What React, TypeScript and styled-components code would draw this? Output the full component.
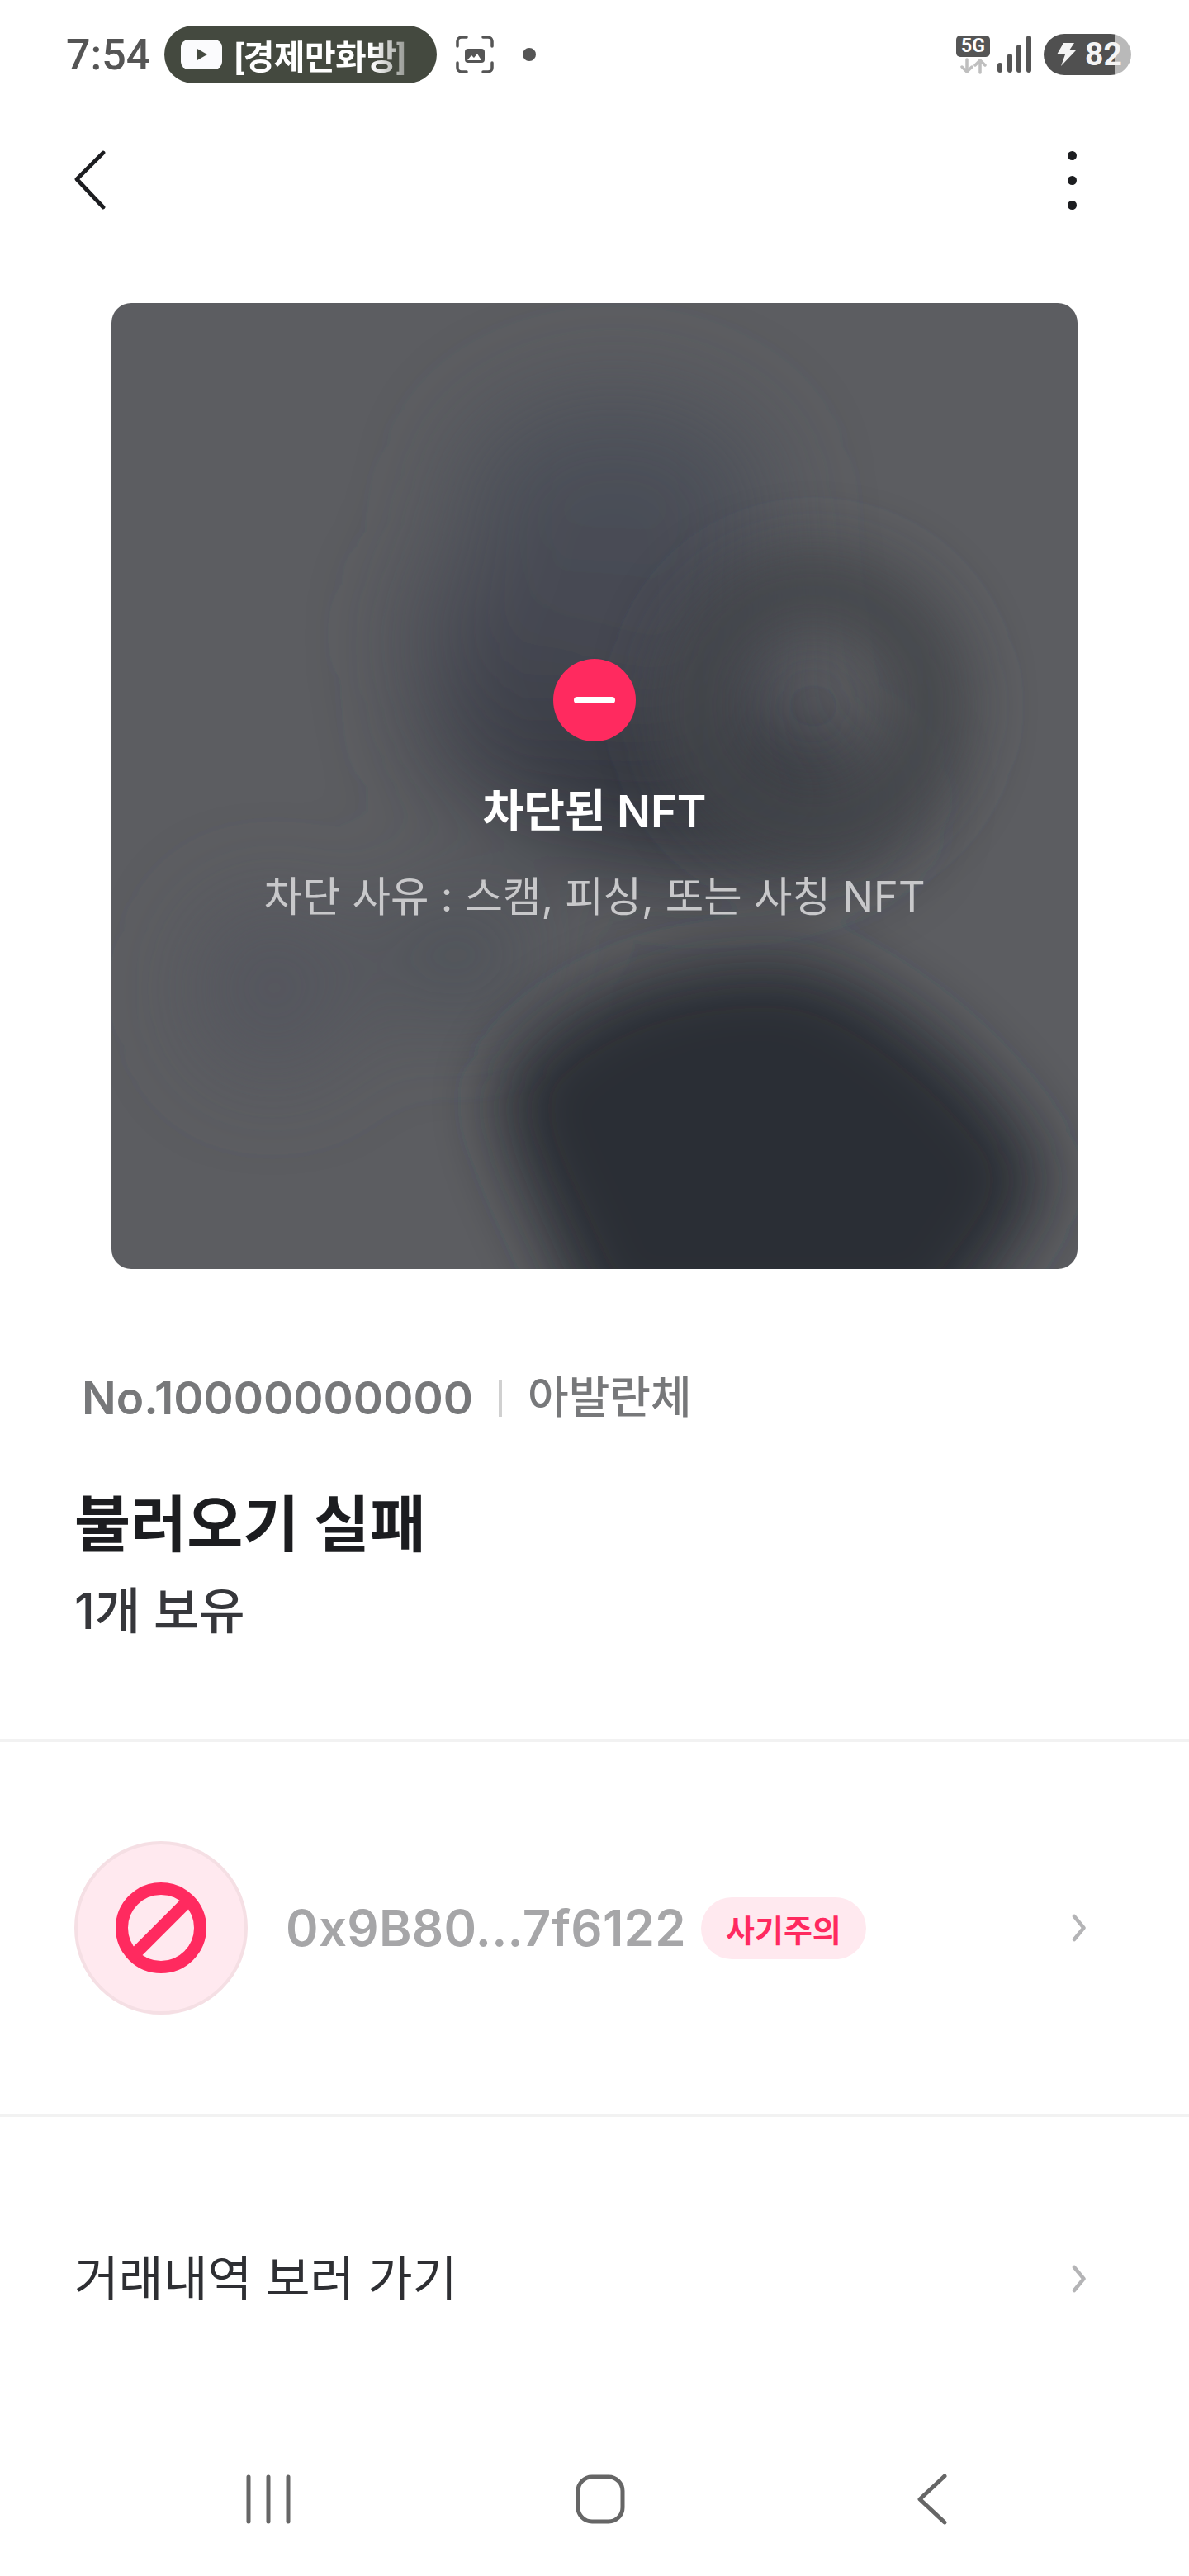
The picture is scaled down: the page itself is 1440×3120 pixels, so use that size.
import React from 'react'
import styled, { createGlobalStyle } from 'styled-components'

const GlobalStyle = createGlobalStyle`
  html, body {
    margin: 0;
    padding: 0;
    background: #ffffff;
  }
  * {
    box-sizing: border-box;
  }
`

const FONT = `Inter, "Noto Sans CJK KR", "Noto Sans", sans-serif`
const SYSTEM_FONT = `Roboto, "Noto Sans CJK KR", sans-serif`

const Chevron = () => (
  <ChevronIcon viewBox="0 0 18 34" fill="none">
    <path d="M3 3l11.5 14L3 31" stroke="#b4b4b6" strokeWidth="4.5" strokeLinecap="round" strokeLinejoin="round" />
  </ChevronIcon>
)

const BlurredArt = () => (
  <Art viewBox="0 0 1170 1170">
    <defs>
      <filter id="soft" x="-60%" y="-60%" width="220%" height="220%">
        <feGaussianBlur stdDeviation="40" />
      </filter>
      <filter id="softer" x="-60%" y="-60%" width="220%" height="220%">
        <feGaussianBlur stdDeviation="62" />
      </filter>
    </defs>
    <g filter="url(#softer)">
      <ellipse cx="610" cy="240" rx="190" ry="130" fill="#4b4f58" />
      <ellipse cx="590" cy="400" rx="230" ry="130" fill="#464953" />
      <ellipse cx="510" cy="520" rx="130" ry="90" fill="#3c3f49" />
      <ellipse cx="720" cy="600" rx="230" ry="90" fill="#33353e" />
      <ellipse cx="195" cy="830" rx="90" ry="100" fill="#52555d" />
      <ellipse cx="420" cy="790" rx="100" ry="70" fill="#4e5159" />
    </g>
    <g filter="url(#soft)">
      <circle cx="850" cy="488" r="145" fill="none" stroke="#434448" strokeWidth="85" />
      <path d="M470 950C520 850 680 780 850 800C960 840 1090 960 1130 1050C1130 1110 1060 1170 1020 1250L580 1250C540 1130 470 1030 470 950Z" fill="#2a2d35" />
    </g>
  </Art>
)

export default function App() {
  return (
    <Page>
      <GlobalStyle />
      <StatusBar>
        <StatusLeft>
          <Clock>7:54</Clock>
          <MediaPill>
            <svg width="50" height="36" viewBox="0 0 50 36">
              <rect width="50" height="36" rx="9" fill="#fbfbfd" />
              <path d="M19 10.5v15l13-7.500z" fill="#44493f" />
            </svg>
            <MediaTitle>[경제만화방]</MediaTitle>
          </MediaPill>
          <svg width="46" height="46" viewBox="0 0 46 46" fill="none">
            <path d="M2 13V7a5 5 0 0 1 5-5h6M33 2h6a5 5 0 0 1 5 5v6M44 33v6a5 5 0 0 1-5 5h-6M13 44H7a5 5 0 0 1-5-5v-6" stroke="#555" strokeWidth="3.500" strokeLinecap="round" />
            <rect x="11" y="16" width="24" height="17" rx="4" fill="#555" />
            <path d="M14 30l5-6 3 3 4-5 5 8z" fill="#fff" />
          </svg>
          <StatusDot />
        </StatusLeft>
        <StatusRight>
          <NetworkStack>
            <FiveG>5G</FiveG>
            <svg width="32" height="20" viewBox="0 0 32 20" fill="none" stroke="#bfbfbf" strokeWidth="3.500" strokeLinecap="round" strokeLinejoin="round">
              <path d="M8 2v15M2 11l6 6 6-6" />
              <path d="M24 18V3M18 9l6-6 6 6" />
            </svg>
          </NetworkStack>
          <svg width="42" height="46" viewBox="0 0 42 46" fill="#555">
            <rect x="0" y="33" width="6" height="12" rx="3" />
            <rect x="12" y="22" width="6" height="23" rx="3" />
            <rect x="23" y="11" width="6" height="34" rx="3" />
            <rect x="35" y="0" width="6" height="45" rx="3" />
          </svg>
          <Battery>
            <svg width="24" height="28" viewBox="0 0 24 28" fill="#f4f4f4">
              <path d="M9 0h13l-6 9h8L6 28l5-14H1z" />
            </svg>
            <BatteryLevel>82</BatteryLevel>
          </Battery>
        </StatusRight>
      </StatusBar>

      <TopBar>
        <svg width="39" height="72" viewBox="0 0 39 72" fill="none">
          <path d="M35 3L3 35l32 34" stroke="#1c1d20" strokeWidth="4.800" strokeLinecap="round" strokeLinejoin="round" />
        </svg>
        <MoreDots>
          <i />
          <i />
          <i />
        </MoreDots>
      </TopBar>

      <NftCard>
        <BlurredArt />
        <BlockedNotice>
          <BlockedMark>
            <span />
          </BlockedMark>
          <BlockedTitle>차단된 NFT</BlockedTitle>
          <BlockedReason>차단 사유 : 스캠, 피싱, 또는 사칭 NFT</BlockedReason>
        </BlockedNotice>
      </NftCard>

      <Summary>
        <MetaRow>
          <TokenNo>No.10000000000</TokenNo>
          <MetaDivider />
          <span>아발란체</span>
        </MetaRow>
        <Title>불러오기 실패</Title>
        <Owned>1개 보유</Owned>
      </Summary>

      <OwnerRow>
        <Avatar>
          <svg width="110" height="110" viewBox="0 0 110 110" fill="none" stroke="#ff2a5f" strokeWidth="15">
            <circle cx="55" cy="55" r="47.500" />
            <path d="M88 22L22 88" />
          </svg>
        </Avatar>
        <Address>0x9B80...7f6122</Address>
        <ScamBadge>사기주의</ScamBadge>
        <RowEnd>
          <Chevron />
        </RowEnd>
      </OwnerRow>

      <HistoryRow>
        <HistoryLabel>거래내역 보러 가기</HistoryLabel>
        <RowEnd>
          <Chevron />
        </RowEnd>
      </HistoryRow>

      <NavBar>
        <NavSlot>
          <svg width="54" height="60" viewBox="0 0 54 60" stroke="#666" strokeWidth="5" strokeLinecap="round">
            <path d="M3 3v54M27 3v54M51 3v54" />
          </svg>
        </NavSlot>
        <NavSlot>
          <svg width="60" height="60" viewBox="0 0 60 60" fill="none">
            <rect x="3" y="3" width="54" height="54" rx="17" stroke="#666" strokeWidth="5" />
          </svg>
        </NavSlot>
        <NavSlot>
          <svg width="36" height="62" viewBox="0 0 36 62" fill="none">
            <path d="M33 3L3 31l30 28" stroke="#666" strokeWidth="5" strokeLinecap="round" strokeLinejoin="round" />
          </svg>
        </NavSlot>
      </NavBar>
    </Page>
  )
}

const Page = styled.div`
  width: 1440px;
  height: 3120px;
  display: flex;
  flex-direction: column;
  background: #ffffff;
  font-family: ${FONT};
  overflow: hidden;

  > * {
    flex: none;
  }
`

const StatusBar = styled.div`
  height: 132px;
  padding: 0 70px 0 80px;
  display: flex;
  align-items: center;
  justify-content: space-between;
  font-family: ${SYSTEM_FONT};
`

const StatusLeft = styled.div`
  display: flex;
  align-items: center;
`

const Clock = styled.span`
  width: 119px;
  font-size: 52px;
  font-weight: 500;
  color: #555555;
`

const MediaPill = styled.div`
  width: 330px;
  height: 70px;
  margin-right: 23px;
  padding-left: 20px;
  display: flex;
  align-items: center;
  gap: 15px;
  border-radius: 35px;
  background: #44493f;
`

const MediaTitle = styled.span`
  font-size: 41px;
  font-weight: 700;
  letter-spacing: -0.6px;
  color: #ffffff;
  -webkit-mask-image: linear-gradient(90deg, #000 80%, rgba(0, 0, 0, 0.45) 100%);
  mask-image: linear-gradient(90deg, #000 80%, rgba(0, 0, 0, 0.45) 100%);
`

const StatusDot = styled.span`
  width: 16px;
  height: 16px;
  margin-left: 35px;
  border-radius: 50%;
  background: #555555;
`

const StatusRight = styled.div`
  display: flex;
  align-items: center;
`

const NetworkStack = styled.div`
  width: 41px;
  margin-right: 9px;
  display: flex;
  flex-direction: column;
  align-items: center;
  gap: 1px;
`

const FiveG = styled.span`
  width: 41px;
  height: 26px;
  display: flex;
  align-items: center;
  justify-content: center;
  border-radius: 5px;
  background: #555555;
  color: #ffffff;
  font-size: 23px;
  font-weight: 700;
  line-height: 1;
`

const Battery = styled.div`
  width: 106px;
  height: 50px;
  margin-left: 14px;
  padding-left: 15px;
  display: flex;
  align-items: center;
  gap: 11px;
  border-radius: 25px;
  background: linear-gradient(90deg, #505050 86px, #b9b9b9 86px);
`

const BatteryLevel = styled.span`
  font-size: 39px;
  font-weight: 700;
  line-height: 1;
  color: #f4f4f4;
`

const TopBar = styled.div`
  height: 170px;
  padding: 2px 136px 0 90px;
  display: flex;
  align-items: center;
  justify-content: space-between;
`

const MoreDots = styled.div`
  display: flex;
  flex-direction: column;
  gap: 19px;

  i {
    display: block;
    width: 11px;
    height: 11px;
    border-radius: 50%;
    background: #1c1d20;
  }
`

const NftCard = styled.div`
  position: relative;
  width: 1170px;
  height: 1170px;
  margin: 65px auto 0;
  display: flex;
  align-items: center;
  justify-content: center;
  border-radius: 24px;
  background: #5c5d61;
  overflow: hidden;
`

const Art = styled.svg`
  position: absolute;
  inset: 0;
  width: 100%;
  height: 100%;
`

const BlockedNotice = styled.div`
  position: relative;
  margin-top: 15px;
  display: flex;
  flex-direction: column;
  align-items: center;
`

const BlockedMark = styled.div`
  width: 100px;
  height: 100px;
  display: flex;
  align-items: center;
  justify-content: center;
  border-radius: 50%;
  background: #ff2a5f;

  span {
    width: 50px;
    height: 8px;
    border-radius: 4px;
    background: #ffffff;
  }
`

const BlockedTitle = styled.div`
  margin-top: 47px;
  font-size: 54px;
  line-height: 76px;
  font-weight: 600;
  color: #ffffff;
`

const BlockedReason = styled.div`
  margin-top: 30px;
  font-size: 50.5px;
  line-height: 70px;
  font-weight: 400;
  color: #c8c8ca;
`

const Summary = styled.div`
  height: 573px;
  padding: 120px 90px 0;
  border-bottom: 4px solid #f2f2f2;
`

const MetaRow = styled.div`
  margin-left: 9px;
  display: flex;
  align-items: center;
  gap: 31px;
  font-size: 54px;
  line-height: 72px;
  font-weight: 500;
  color: #77787a;
`

const TokenNo = styled.span`
  font-size: 55px;
  font-weight: 600;
`

const MetaDivider = styled.i`
  width: 4px;
  height: 45px;
  background: #d0d0d0;
`

const Title = styled.h1`
  margin: 67px 0 0;
  font-size: 74px;
  line-height: 100px;
  font-weight: 700;
  color: #1c1d20;
`

const Owned = styled.div`
  margin-top: 17px;
  font-size: 60px;
  line-height: 76px;
  font-weight: 500;
  color: #36373b;
`

const OwnerRow = styled.div`
  height: 454px;
  padding: 0 124px 0 90px;
  display: flex;
  align-items: center;
  border-bottom: 4px solid #f2f2f2;
`

const Avatar = styled.div`
  width: 210px;
  height: 210px;
  flex: none;
  margin-right: 46px;
  display: flex;
  align-items: center;
  justify-content: center;
  border-radius: 50%;
  border: 4px solid #f5dfe4;
  background: #ffe9ef;
`

const Address = styled.span`
  font-size: 60px;
  font-weight: 600;
  letter-spacing: 0.3px;
  color: #a6a6a8;
`

const ScamBadge = styled.span`
  height: 75px;
  margin-left: 18px;
  padding: 0 30px;
  display: flex;
  align-items: center;
  border-radius: 38px;
  background: #ffe9ef;
  color: #ff2a5f;
  font-size: 38px;
  font-weight: 700;
`

const RowEnd = styled.span`
  margin-left: auto;
  display: flex;
`

const ChevronIcon = styled.svg`
  width: 18px;
  height: 34px;
`

const HistoryRow = styled.div`
  height: 370px;
  padding: 22px 124px 0 90px;
  display: flex;
  align-items: center;
`

const HistoryLabel = styled.span`
  font-size: 58.5px;
  line-height: 78px;
  font-weight: 400;
  color: #2e2f33;
`

const NavBar = styled.div`
  height: 186px;
  padding: 0 0 0 14px;
  display: flex;
  align-items: center;
  justify-content: center;
  gap: 302px;
`

const NavSlot = styled.div`
  width: 100px;
  display: flex;
  justify-content: center;
`
